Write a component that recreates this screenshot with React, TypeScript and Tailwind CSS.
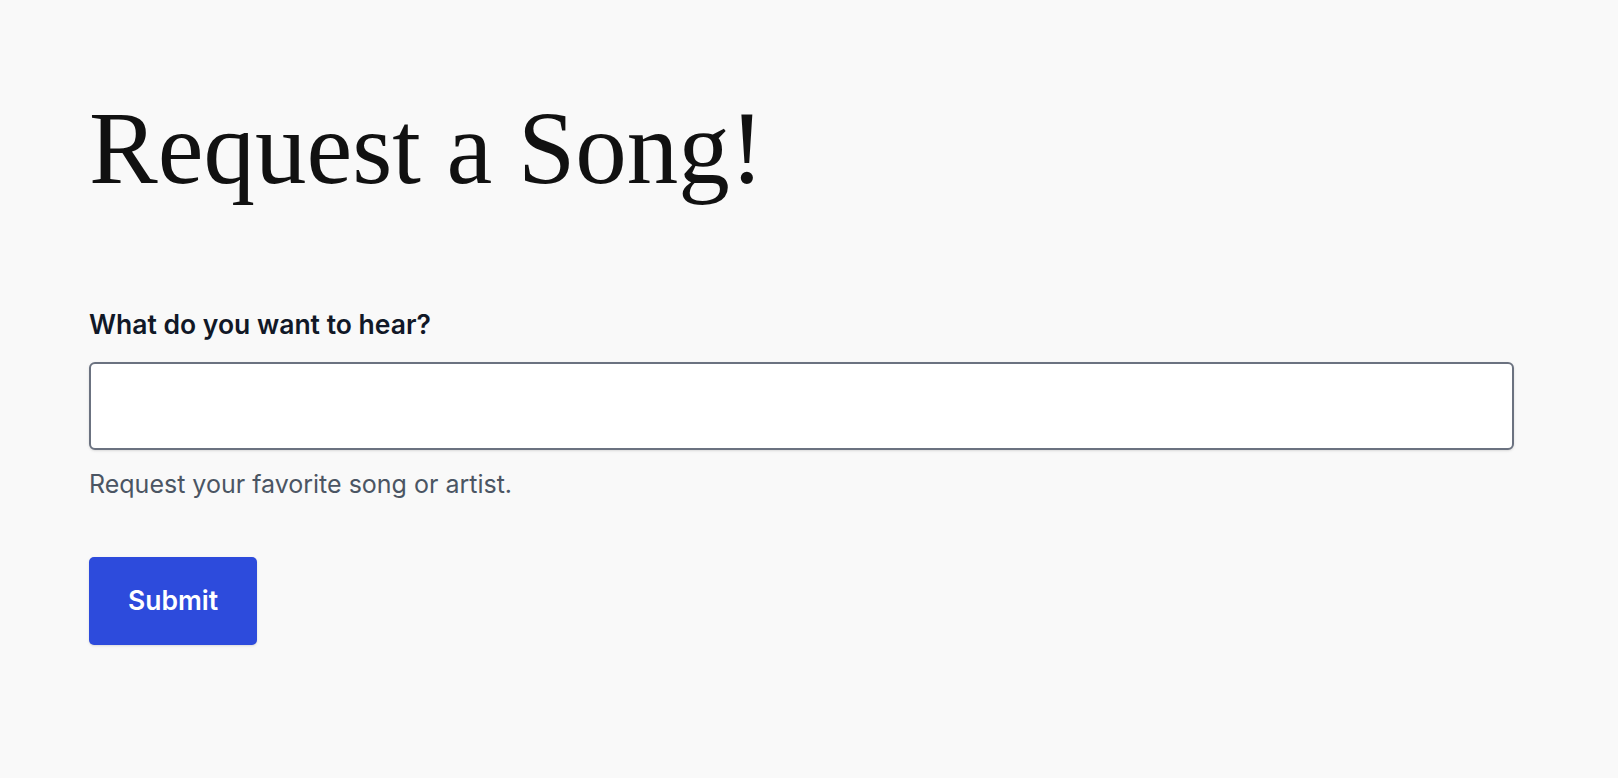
import React from "react";

export default function App() {
  return (
    <div className="min-h-screen w-full bg-[#f9f9f9]">
      <div className="pl-[89px] pt-[87px] w-[1514px]">
        <h1 className="text-[103px] leading-[1.2] text-[#111111] font-['Liberation_Serif',serif] font-normal">
          Request a Song!
        </h1>
        <form className="mt-[97px] flex flex-col font-['Inter',sans-serif]">
          <label className="text-[26.5px] leading-[32px] font-semibold text-[#111827]">
            What do you want to hear?
          </label>
          <input
            type="text"
            className="mt-[22.5px] h-[88px] w-full rounded-[6px] border-2 border-[#6b7280] bg-white shadow-sm outline-none"
          />
          <p className="mt-[18px] text-[25px] leading-[32px] text-[#4b5563]">
            Request your favorite song or artist.
          </p>
          <button
            type="button"
            className="mt-[57px] h-[88px] w-[168px] rounded-[5px] bg-[#2d4bdc] text-[26.5px] font-semibold text-white shadow-sm"
          >
            Submit
          </button>
        </form>
      </div>
    </div>
  );
}
